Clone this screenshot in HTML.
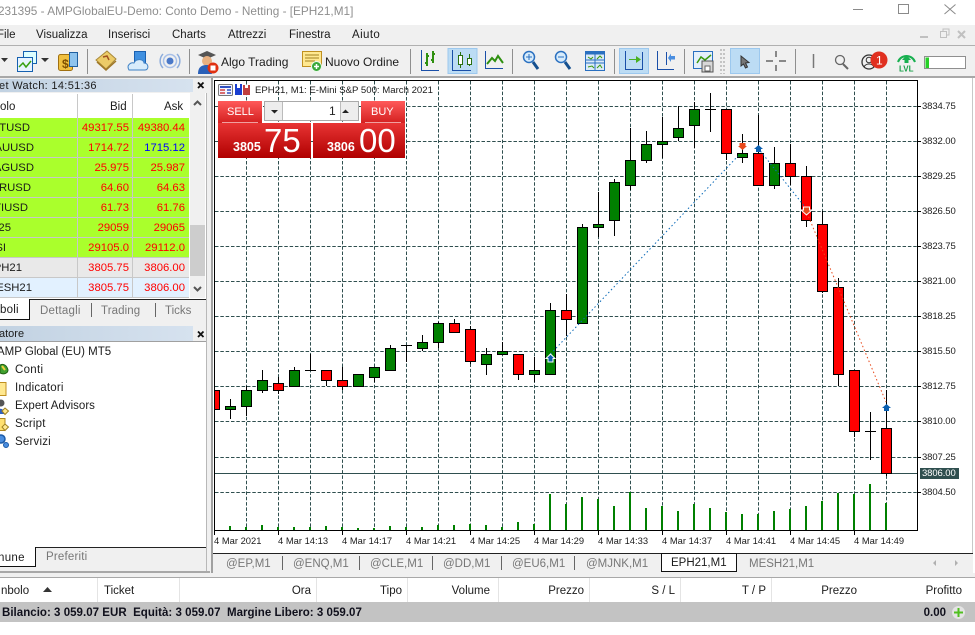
<!DOCTYPE html>
<html><head><meta charset="utf-8"><title>EPH21,M1</title>
<style>
html,body{margin:0;padding:0}
body{width:975px;height:635px;overflow:hidden;background:#fff;position:relative;font-family:"Liberation Sans",sans-serif;font-size:11.5px;color:#1c1c1c}
.a{position:absolute}
.t{position:absolute;white-space:nowrap;line-height:14px}
.r{text-align:right}
.row{position:absolute;left:0;width:189px;height:19px;border-bottom:1px solid #c8c8c8}
.row span{position:absolute;top:3px;line-height:14px;white-space:nowrap;font-size:11.3px}
.row .s{color:#1a1a1a}
.row .b{right:60px;color:#f00}
.row .k{right:4px;color:#f00}
.v{position:absolute;background:#a0a0a0;width:1px}
.g{color:#777}
.pl{position:absolute;left:922px;font-size:9.5px;line-height:12px;color:#1c1c1c;letter-spacing:-.1px}
.tl{position:absolute;top:535px;font-size:9.4px;line-height:12px;color:#1c1c1c;white-space:nowrap}
svg{position:absolute;overflow:visible}
</style></head><body>
<div class="t" style="left:-2px;top:4px;font-size:11.8px;color:#8e8e8e">231395 - AMPGlobalEU-Demo: Conto Demo - Netting - [EPH21,M1]</div>
<svg style="left:0;top:0" width="975" height="25"><path d="M853 9.500H863M898.500 4.500H908.500V13.500H898.500ZM944.500 4.500L955.500 14M955.500 4.500L944.500 14" fill="none" stroke="#8a8a8a"/></svg>
<div class="a" style="left:0;top:25px;width:975px;height:52px;background:#f0f0f0"></div>
<div class="a" style="left:0;top:45px;width:975px;height:1px;background:#b0b0b0"></div>
<div class="a" style="left:0;top:76px;width:975px;height:2px;background:#a8a8a8"></div>
<div class="t" style="left:-3px;top:28px">File</div>
<div class="t" style="left:36px;top:28px">Visualizza</div>
<div class="t" style="left:108px;top:28px">Inserisci</div>
<div class="t" style="left:172px;top:28px">Charts</div>
<div class="t" style="left:228px;top:28px">Attrezzi</div>
<div class="t" style="left:289px;top:28px">Finestra</div>
<div class="t" style="left:352px;top:28px;letter-spacing:.4px">Aiuto</div>
<svg style="left:0;top:25px" width="975" height="20"><path d="M920 12H928" stroke="#c0c0c0" stroke-width="2"/><path d="M940.500 6.500H946.500V12.500H940.500ZM943 6V4H949V10H947" fill="none" stroke="#c0c0c0"/><path d="M958 6L965 13M965 6L958 13" stroke="#c0c0c0" stroke-width="2"/></svg>

<!-- toolbar -->
<svg style="left:0;top:45px" width="975" height="32" fill="none">
<rect x="448" y="3.500" width="29" height="25" fill="#bcdcf4" stroke="#9cc8ee"/>
<rect x="619.500" y="3.500" width="29" height="25" fill="#bcdcf4" stroke="#9cc8ee"/>
<rect x="730.500" y="3.500" width="29" height="25" fill="#bcdcf4" stroke="#9cc8ee"/>
<path d="M87.500 4V29M189.500 4V29M410.500 4V29M512.500 4V29M614.500 4V29M684.500 4V29M795.500 4V29" stroke="#8f8f8f"/>
<path d="M721 4V29M724 4V29" stroke="#c4c4c4" stroke-dasharray="2 2" stroke-width="2"/>
<path d="M1 13L8 13L4.500 17ZM41 13L49 13L45 17Z" fill="#333"/>
<!-- chart windows -->
<rect x="23.500" y="6.500" width="13" height="12" fill="#dff" stroke="#1560b0"/><rect x="17.500" y="12.500" width="15" height="14" fill="#e8f4ff" stroke="#1560b0"/><path d="M19 22L23 18L26 22L31 16" stroke="#38a010" stroke-width="1.500"/>
<rect x="58.500" y="9.500" width="14" height="16" rx="2" fill="#f0c040" stroke="#a07010"/><rect x="69.500" y="7.500" width="8" height="14" fill="#8fc4ee" stroke="#2060a0"/>
<text x="62" y="23" font-size="12" font-weight="bold" fill="#805000" font-family="Liberation Sans">$</text>
<!-- book -->
<path d="M96 15L107 6L116 14L106 24Z" fill="#eccb68" stroke="#a88838"/><path d="M97 17L106 25L116 16" stroke="#a07828" stroke-width="1.500"/><path d="M103 12L107 11L109 15" stroke="#a05020" stroke-width="1.500"/>
<!-- cloud -->
<rect x="134.500" y="6.500" width="11" height="13" fill="#4090e0" stroke="#1a60b0"/><path d="M129 25C126 20 131 17 134 18C136 13 144 14 144 18C149 18 149 25 145 25Z" fill="#d8ecfb" stroke="#3d80c4"/>
<!-- signal -->
<circle cx="170" cy="16" r="3.500" fill="#4a78c8"/><circle cx="170" cy="16" r="6.500" stroke="#a8c0e8" stroke-width="1.500"/><path d="M163 9A10 10 0 0 0 163 23M177 9A10 10 0 0 1 177 23" stroke="#8cacdc" stroke-width="1.500"/>
<!-- algo -->
<path d="M198 10L207 6L216 10L207 14Z" fill="#555"/><circle cx="207" cy="16" r="5" fill="#e8b080"/><path d="M198 29C198 20 204 20 208 20L212 29Z" fill="#2a60b8"/><circle cx="213" cy="23" r="5.500" fill="#e03010"/><rect x="210.500" y="20.500" width="5" height="5" fill="#fff"/>
<!-- order -->
<rect x="302.500" y="6.500" width="19" height="15" fill="#ffe890" stroke="#c09020"/><path d="M305 10H319M305 13H319M305 16H315" stroke="#a08020"/><circle cx="316.500" cy="21.500" r="5" fill="#38a838" stroke="#e8f8e8"/><path d="M314 21.500H319M316.500 19V24" stroke="#fff" stroke-width="1.500"/>
<!-- bar chart -->
<path d="M421.500 5V25.500H439" stroke="#1a4fa8"/><path d="M427 8V21M425 18H427M427 11H429M433 6V18M431 15H433M433 9H435" stroke="#2f9010" stroke-width="2"/>
<!-- candle -->
<path d="M452.500 5V25.500H471" stroke="#1a4fa8"/><path d="M460.500 7V23M469.500 9V21" stroke="#2a7010"/><rect x="458.500" y="10.500" width="4" height="9" fill="#fff" stroke="#2a7010"/><rect x="467.500" y="13.500" width="4" height="6" fill="#fff" stroke="#2a7010"/>
<!-- line -->
<path d="M485.500 6V23.500H503" stroke="#1a4fa8"/><path d="M487 19L492 13L495 16L498 11L503 18" stroke="#2f9010" stroke-width="2"/>
<!-- zoom -->
<circle cx="529" cy="12" r="5.500" fill="#d8ecfb" stroke="#2a70c0" stroke-width="1.500"/><path d="M533 17L538 24" stroke="#15508f" stroke-width="3"/><path d="M526 12H532M529 9V15" stroke="#2a70c0"/>
<circle cx="561" cy="12" r="5.500" fill="#d8ecfb" stroke="#2a70c0" stroke-width="1.500"/><path d="M565 17L570 24" stroke="#15508f" stroke-width="3"/><path d="M558 12H564" stroke="#2a70c0"/>
<!-- tile -->
<rect x="585.500" y="6.500" width="19" height="19" fill="#dceaf8" stroke="#2a70c0"/><rect x="585.500" y="6.500" width="19" height="3" fill="#2a70c0"/><path d="M595 7V25M586 15H604M586 18H604" stroke="#2a70c0"/><path d="M588 12L591 14L593 12M597 14L600 11L602 13M588 22L592 21L594 23M597 23L600 20L602 23" stroke="#3a9a10"/>
<!-- autoscroll -->
<path d="M625.500 6V24.500H643" stroke="#1a4fa8"/><path d="M642.500 7V24" stroke="#1a4fa8"/><path d="M629 14H636V11L641 14.500L636 18V15H629Z" fill="#48b020"/>
<path d="M657.500 6V24.500H674" stroke="#1a4fa8"/><path d="M666.500 7V20" stroke="#1a4fa8"/><path d="M675 11H671V8.500L668 13L671 17V14.500H675Z" fill="#4a8ee0"/>
<!-- save -->
<rect x="693.500" y="6.500" width="19" height="17" fill="#e4f0fb" stroke="#2a70c0"/><path d="M697 18L701 12L705 15L711 10" stroke="#3a9a10" stroke-width="1.500"/><rect x="702" y="16" width="11" height="11" fill="#d8d8d8" stroke="#555"/><rect x="705" y="21" width="5" height="5" fill="#fff" stroke="#666"/>
<!-- cursor -->
<path d="M741 11L741 21L743.500 19L745.500 23L747.500 22L745.500 18L749 17.500Z" fill="#777" stroke="#333"/>
<path d="M766 16H773M779 16H786M776 6V12M776 20V26" stroke="#666" stroke-width="1.500"/>
<path d="M813.500 9V23" stroke="#777" stroke-width="1.500"/>
<circle cx="840" cy="15" r="4.500" stroke="#666" stroke-width="1.300"/><path d="M843 19L848 24" stroke="#666" stroke-width="2"/>
<circle cx="869" cy="17" r="7" stroke="#333" stroke-width="1.300"/><circle cx="869" cy="15" r="2.800" stroke="#333"/><path d="M864 22C866 18 872 18 874 22" stroke="#333"/>
<circle cx="879" cy="15" r="8.500" fill="#e03020"/><text x="876" y="19.500" font-size="12" fill="#fff" font-family="Liberation Sans">1</text>
<path d="M898 17A9 9 0 0 1 915 17" stroke="#18b050" stroke-width="2"/><path d="M906.500 10L911 15H908.500V18H904.500V15H902Z" fill="#18b050"/>
<text x="899" y="26.500" font-size="8" font-weight="bold" fill="#18a048" font-family="Liberation Sans">LVL</text>
<rect x="924.500" y="11.500" width="41" height="12" fill="#fff" stroke="#8f8f8f"/><rect x="925.500" y="12.500" width="3.500" height="10.500" fill="#28d028"/>
</svg>
<div class="t" style="left:221px;top:55px;font-size:12px">Algo Trading</div>
<div class="t" style="left:325px;top:55px;font-size:12px">Nuovo Ordine</div>

<!-- left panel frame -->
<div class="a" style="left:0;top:78px;width:212px;height:495px;background:#f0f0f0"></div>
<div class="a" style="left:206px;top:93px;width:1px;height:479px;background:#b8b8b8"></div>
<div class="a" style="left:211px;top:78px;width:2px;height:495px;background:#a0a0a0"></div>

<!-- market watch -->
<div class="a" style="left:0;top:79px;width:193px;height:13px;background:linear-gradient(90deg,#c2d2e2,#d6e2ef)"></div>
<div class="t" style="left:-1px;top:79px;font-size:11px;letter-spacing:.33px">et Watch: 14:51:36</div>
<svg style="left:197px;top:81px" width="8" height="9"><path d="M1 1.500L6.500 7M6.500 1.500L1 7" stroke="#111" stroke-width="1.800"/></svg>
<div class="a" style="left:0;top:93px;width:206px;height:206px;background:#fff"></div>
<div class="t" style="left:0;top:100px">olo</div>
<div class="t" style="left:110px;top:100px">Bid</div>
<div class="t" style="left:164px;top:100px">Ask</div>
<div class="row" style="top:118px;background:#aaff2c"><span class="s" style="right:159px">BTUSD</span><span class="b">49317.55</span><span class="k">49380.44</span></div>
<div class="row" style="top:138px;background:#aaff2c"><span class="s" style="right:155px">AUUSD</span><span class="b">1714.72</span><span class="k" style="color:#00f">1715.12</span></div>
<div class="row" style="top:158px;background:#aaff2c"><span class="s" style="right:155px">AGUSD</span><span class="b">25.975</span><span class="k">25.987</span></div>
<div class="row" style="top:178px;background:#aaff2c"><span class="s" style="right:158px">BRUSD</span><span class="b">64.60</span><span class="k">64.63</span></div>
<div class="row" style="top:198px;background:#aaff2c"><span class="s" style="right:161px">TIUSD</span><span class="b">61.73</span><span class="k">61.76</span></div>
<div class="row" style="top:218px;background:#aaff2c"><span class="s" style="right:178px">25</span><span class="b">29059</span><span class="k">29065</span></div>
<div class="row" style="top:238px;background:#aaff2c"><span class="s" style="right:183px">SI</span><span class="b">29105.0</span><span class="k">29112.0</span></div>
<div class="row" style="top:258px;background:#e9e9e9"><span class="s" style="right:167px">PH21</span><span class="b">3805.75</span><span class="k">3806.00</span></div>
<div class="row" style="top:278px;background:#e2f1ff"><span class="s" style="right:157px">ESH21</span><span class="b">3805.75</span><span class="k">3806.00</span></div>
<div class="a" style="left:77px;top:94px;width:1px;height:204px;background:#c8c8c8"></div>
<div class="a" style="left:132px;top:94px;width:1px;height:204px;background:#c8c8c8"></div>
<div class="a" style="left:190px;top:93px;width:15px;height:205px;background:#f0f0f0"></div>
<div class="a" style="left:190px;top:225px;width:15px;height:51px;background:#cdcdcd"></div>
<svg style="left:190px;top:98px" width="15" height="198" fill="none"><path d="M4 7L7.500 3.500L11 7M4 189L7.500 192.500L11 189" stroke="#555" stroke-width="2"/></svg>
<div class="a" style="left:0;top:299px;width:206px;height:1px;background:#222"></div>
<div class="a" style="left:0;top:299px;width:30px;height:21px;background:#fff;border-right:1px solid #111;border-bottom:1px solid #111;box-sizing:border-box"></div>
<div class="t" style="left:0;top:303px;font-size:11.5px;letter-spacing:.2px">boli</div>
<div class="t g" style="left:40px;top:304px;letter-spacing:.2px">Dettagli</div>
<div class="t g" style="left:101px;top:304px;letter-spacing:.1px">Trading</div>
<div class="t g" style="left:165px;top:304px">Ticks</div>
<div class="v" style="left:91px;top:303px;height:14px;background:#666"></div>
<div class="v" style="left:155px;top:303px;height:14px;background:#666"></div>

<!-- navigator -->
<div class="a" style="left:0;top:326px;width:193px;height:15px;background:linear-gradient(90deg,#c2d2e2,#d6e2ef)"></div>
<div class="t" style="left:-1px;top:327px;font-size:11px">atore</div>
<svg style="left:197px;top:330px" width="8" height="9"><path d="M1 1.500L6.500 7M6.500 1.500L1 7" stroke="#111" stroke-width="1.800"/></svg>
<div class="a" style="left:0;top:341px;width:206px;height:207px;background:#fff;border-top:1px solid #a0a0a0;box-sizing:border-box"></div>
<div class="t" style="left:-3px;top:345px;font-size:11.5px">AMP Global (EU) MT5</div>
<div class="t" style="left:15px;top:363px;letter-spacing:.3px">Conti</div>
<div class="t" style="left:15px;top:381px;letter-spacing:.2px">Indicatori</div>
<div class="t" style="left:15px;top:399px">Expert Advisors</div>
<div class="t" style="left:15px;top:417px;letter-spacing:.2px">Script</div>
<div class="t" style="left:15px;top:435px;letter-spacing:.2px">Servizi</div>
<svg style="left:0;top:360px" width="12" height="90" fill="none">
<path d="M0 5C4 3 7 6 8 10C8 13 4 15 0 13Z" fill="#40a030" stroke="#206010"/><path d="M2 6L5 10" stroke="#f0d040" stroke-width="2"/>
<rect x="-3" y="22.500" width="9" height="13" fill="#ffe890" stroke="#c09020"/>
<circle cx="1" cy="43" r="3.500" fill="#555"/><path d="M-3 54C-3 47 4 47 5 54Z" fill="#3060c0"/><path d="M5 48L8.500 51L5 54.500L2 51Z" fill="#ffe890" stroke="#a08020"/>
<rect x="-3" y="58.500" width="8" height="12" fill="#ffe070" stroke="#b08820"/><path d="M5 64L8.500 67L5 70.500L2 67Z" fill="#ffe890" stroke="#a08020"/>
<circle cx="1" cy="79" r="4" fill="#4a8ee0" stroke="#1a5aa8" stroke-width="1.500"/><circle cx="6" cy="85" r="2.500" fill="#4a8ee0" stroke="#1a5aa8"/>
</svg>
<div class="a" style="left:0;top:547px;width:206px;height:1px;background:#222"></div>
<div class="a" style="left:0;top:547px;width:36px;height:20px;background:#fff;border:1px solid #111;border-left:0;border-top:0;box-sizing:border-box"></div>
<div class="t" style="left:-2px;top:551px;letter-spacing:.3px">nune</div>
<div class="t g" style="left:46px;top:550px;letter-spacing:.2px">Preferiti</div>
<div class="a" style="left:0;top:571px;width:210px;height:2px;background:#a8a8a8"></div>

<!-- chart -->
<div class="a" style="left:213px;top:78px;width:762px;height:475px;background:#fff"></div>
<svg style="left:0;top:0" width="975" height="635" fill="none">
<g stroke="#2f4f4f">
<path stroke-dasharray="3.500 1.830" d="M246.500 81V530M278.500 81V530M310.500 81V530M342.500 81V530M374.500 81V530M406.500 81V530M438.500 81V530M470.500 81V530M502.500 81V530M534.500 81V530M566.500 81V530M598.500 81V530M630.500 81V530M662.500 81V530M694.500 81V530M726.500 81V530M758.500 81V530M790.500 81V530M822.500 81V530M854.500 81V530M886.500 81V530"/>
<path stroke-dasharray="3.500 1.830" d="M215 106.500H917M215 141.500H917M215 176.500H917M215 211.500H917M215 246.500H917M215 281.500H917M215 316.500H917M215 351.500H917M215 386.500H917M215 421.500H917M215 457.500H917M215 492.500H917"/>
<path d="M215 473.500H917"/>
</g>
<!-- volumes -->
<path stroke="#008000" stroke-width="2" d="M230 526V530M246 527V530M262 525V530M278 527V530M294 527V530M310 527V530M326 526V530M342 527V530M358 528V530M374 528V530M390 526V530M406 527V530M422 527V530M438 525V530M454 525V530M470 524V530M486 525V530M502 527V530M518 522V530M534 524V530M550 494V530M566 504V530M582 497V530M598 499V530M614 506V530M630 492V530M646 508V530M662 506V530M678 511V530M694 504V530M710 508V530M726 512V530M742 514V530M758 514V530M774 511V530M790 509V530M806 506V530M822 501V530M838 493V530M854 494V530M870 484V530M886 503V530"/>
<!-- wicks -->
<path stroke="#000" d="M230.500 399V419M246.500 386V416M262.500 370V393M278.500 377V394M294.500 367V386M310.500 354V370M305 370.500H316M326.500 370V386M342.500 367V390M374.500 367V382M390.500 345V370M406.500 345V362M401 345.500H412M422.500 335V351M438.500 322V348M454.500 319V332M470.500 326V364M486.500 348V375M502.500 342V354M518.500 354V380M534.500 357V382M550.500 303V374M566.500 294V336M582.500 224V323M598.500 192V237M614.500 179V236M630.500 128V190M646.500 131V163M662.500 117V158M678.500 106V141M694.500 102V148M710.500 93V132M705 109.500H716M726.500 109V160M742.500 134V163M758.500 115V185M774.500 147V189M790.500 144V185M806.500 166V227M822.500 211V293M838.500 278V386M854.500 370V437M870.500 412V460M865 431.500H876M886.500 390V476"/>
<!-- green bodies -->
<g fill="#008000" stroke="#000">
<rect x="225.500" y="406.500" width="10" height="3"/><rect x="241.500" y="390.500" width="10" height="16"/><rect x="257.500" y="380.500" width="10" height="10"/><rect x="289.500" y="370.500" width="10" height="16"/><rect x="353.500" y="374.500" width="10" height="12"/><rect x="369.500" y="367.500" width="10" height="10"/><rect x="385.500" y="348.500" width="10" height="22"/><rect x="417.500" y="342.500" width="10" height="6"/><rect x="433.500" y="323.500" width="10" height="19"/><rect x="481.500" y="354.500" width="10" height="10"/><rect x="497.500" y="351.500" width="10" height="3"/><rect x="529.500" y="370.500" width="10" height="4"/><rect x="545.500" y="310.500" width="10" height="64"/><rect x="577.500" y="227.500" width="10" height="96"/><rect x="593.500" y="224.500" width="10" height="3"/><rect x="609.500" y="182.500" width="10" height="38"/><rect x="625.500" y="160.500" width="10" height="25"/><rect x="641.500" y="144.500" width="10" height="16"/><rect x="657.500" y="141.500" width="10" height="3"/><rect x="673.500" y="128.500" width="10" height="9"/><rect x="689.500" y="109.500" width="10" height="16"/><rect x="737.500" y="153.500" width="10" height="4"/><rect x="769.500" y="163.500" width="10" height="22"/>
</g>
<!-- red bodies -->
<g fill="#f00" stroke="#000">
<rect x="214.500" y="390.500" width="5" height="19"/><rect x="273.500" y="383.500" width="10" height="7"/><rect x="321.500" y="370.500" width="10" height="10"/><rect x="337.500" y="380.500" width="10" height="6"/><rect x="449.500" y="323.500" width="10" height="9"/><rect x="465.500" y="329.500" width="10" height="32"/><rect x="513.500" y="354.500" width="10" height="20"/><rect x="561.500" y="310.500" width="10" height="9"/><rect x="721.500" y="109.500" width="10" height="44"/><rect x="753.500" y="153.500" width="10" height="32"/><rect x="785.500" y="163.500" width="10" height="13"/><rect x="801.500" y="176.500" width="10" height="44"/><rect x="817.500" y="224.500" width="10" height="67"/><rect x="833.500" y="287.500" width="10" height="87"/><rect x="849.500" y="370.500" width="10" height="61"/><rect x="881.500" y="428.500" width="10" height="45"/>
</g>
<!-- trade lines -->
<path stroke="#0a6ab8" stroke-dasharray="1.500 2.500" d="M550.500 354L738 156M758 148L805 207"/>
<path stroke="#e84a1c" stroke-dasharray="1.500 2.500" d="M807 213L886 402"/>
<!-- arrows -->
<path d="M550.500 354L555 358.500H553V362H548V358.500H546Z" fill="#0a5fb0" stroke="#fff"/>
<path d="M739.500 143H745.500V146H747L742.500 150L738 146H739.500Z" fill="#e84a1c"/>
<path d="M758.500 145L763 149H761V152H756V149H754Z" fill="#0a5fb0"/>
<path d="M803.500 207H809.500V210H812L806.500 215L801 210H803.500Z" fill="#e84a1c" stroke="#fff"/>
<path d="M886.500 404L891 408H889V411H884V408H882Z" fill="#0a5fb0"/>
<!-- frame -->
<path stroke="#000" d="M214.500 80.500H917.500V530.500H214.500Z"/>
<path stroke="#000" d="M917.500 106.500H921M917.500 141.500H921M917.500 176.500H921M917.500 211.500H921M917.500 246.500H921M917.500 281.500H921M917.500 316.500H921M917.500 351.500H921M917.500 386.500H921M917.500 421.500H921M917.500 457.500H921M917.500 492.500H921"/>
<path stroke="#000" d="M214.500 531V535M278.500 531V535M342.500 531V535M406.500 531V535M470.500 531V535M534.500 531V535M598.500 531V535M662.500 531V535M726.500 531V535M790.500 531V535M854.500 531V535"/>
<!-- chart title icons -->
<rect x="218.500" y="84.500" width="14" height="11" rx="1" fill="#f4f4ff" stroke="#777"/><path d="M220 87H231" stroke="#3050c0" stroke-width="2"/><path d="M220 90H225M220 93H225" stroke="#d04040" stroke-width="1.500"/><path d="M227 90H231M227 93H231" stroke="#3050c0" stroke-width="1.500"/>
<path d="M235 84H242V95H235Z" fill="#1a3fd0"/><path d="M243 85H250V95H243Z" fill="#c04040"/><rect x="237" y="84" width="3" height="4" fill="#fff"/><rect x="245" y="85" width="3" height="3" fill="#fff"/>
</svg>
<div class="a" style="left:972px;top:78px;width:1px;height:475px;background:#c8c8c8"></div>

<div class="t" style="left:255px;top:84px;font-size:9.6px">EPH21, M1: E-Mini S&amp;P 500: March 2021</div>

<!-- one click -->
<div class="a" style="left:218px;top:101px;width:44px;height:22px;background:linear-gradient(#ff5a5a,#d42020)"></div>
<div class="a" style="left:361px;top:101px;width:44px;height:22px;background:linear-gradient(#ff5a5a,#d42020)"></div>
<div class="a" style="left:218px;top:123px;width:93px;height:35px;background:linear-gradient(#e83434,#b00000)"></div>
<div class="a" style="left:313px;top:123px;width:92px;height:35px;background:linear-gradient(#e83434,#b00000)"></div>
<div class="a" style="left:222px;top:122px;width:36px;height:1px;background:#f0a0a0"></div>
<div class="a" style="left:365px;top:122px;width:36px;height:1px;background:#f0a0a0"></div>
<div class="t" style="left:227px;top:105px;font-size:11px;color:#fff">SELL</div>
<div class="t" style="left:371px;top:105px;font-size:11px;color:#fff">BUY</div>
<div class="a" style="left:264px;top:101px;width:95px;height:20px;background:#fff;border:1px solid #aaa;box-sizing:border-box"></div>
<div class="a" style="left:265px;top:102px;width:18px;height:18px;background:#ededed;border-right:1px solid #bbb;box-sizing:border-box"></div>
<div class="a" style="left:340px;top:102px;width:18px;height:18px;background:#ededed;border-left:1px solid #bbb;box-sizing:border-box"></div>
<svg style="left:264px;top:101px" width="95" height="20"><path d="M7 9H14L10.500 12.500Z M78 12H85L81.500 8.500Z" fill="#222"/></svg>
<div class="t" style="left:329px;top:104px;font-size:12px;color:#222">1</div>
<div class="t" style="left:233px;top:140px;font-size:12.500px;font-weight:bold;color:#fff">3805</div>
<div class="t" style="left:264px;top:126px;font-size:33px;line-height:30px;color:#fff">75</div>
<div class="t" style="left:327px;top:140px;font-size:12.500px;font-weight:bold;color:#fff">3806</div>
<div class="t" style="left:359px;top:126px;font-size:33px;line-height:30px;color:#fff">00</div>

<!-- price labels -->
<div class="pl" style="top:101px">3834.75</div><div class="pl" style="top:136px">3832.00</div><div class="pl" style="top:171px">3829.25</div><div class="pl" style="top:206px">3826.50</div><div class="pl" style="top:241px">3823.75</div><div class="pl" style="top:276px">3821.00</div><div class="pl" style="top:311px">3818.25</div><div class="pl" style="top:346px">3815.50</div><div class="pl" style="top:381px">3812.75</div><div class="pl" style="top:416px">3810.00</div><div class="pl" style="top:452px">3807.25</div><div class="pl" style="top:487px">3804.50</div>
<div class="a" style="left:920px;top:468px;width:39px;height:11px;background:#2f4f4f"></div>
<div class="pl" style="top:468px;color:#fff">3806.00</div>

<div class="tl" style="left:214px">4 Mar 2021</div><div class="tl" style="left:278px">4 Mar 14:13</div><div class="tl" style="left:342px">4 Mar 14:17</div><div class="tl" style="left:406px">4 Mar 14:21</div><div class="tl" style="left:470px">4 Mar 14:25</div><div class="tl" style="left:534px">4 Mar 14:29</div><div class="tl" style="left:598px">4 Mar 14:33</div><div class="tl" style="left:662px">4 Mar 14:37</div><div class="tl" style="left:726px">4 Mar 14:41</div><div class="tl" style="left:790px">4 Mar 14:45</div><div class="tl" style="left:854px">4 Mar 14:49</div>

<!-- chart tabs -->
<div class="a" style="left:213px;top:553px;width:760px;height:20px;background:#f0f0f0;border-top:1px solid #222;box-sizing:border-box"></div>
<div class="a" style="left:661px;top:553px;width:76px;height:19px;background:#fff;border:1px solid #111;box-sizing:border-box"></div>
<div class="t g" style="left:226px;top:557px">@EP,M1</div>
<div class="t g" style="left:293px;top:557px">@ENQ,M1</div>
<div class="t g" style="left:370px;top:557px">@CLE,M1</div>
<div class="t g" style="left:443px;top:557px">@DD,M1</div>
<div class="t g" style="left:512px;top:557px">@EU6,M1</div>
<div class="t g" style="left:586px;top:557px">@MJNK,M1</div>
<div class="t" style="left:671px;top:556px">EPH21,M1</div>
<div class="t g" style="left:749px;top:557px">MESH21,M1</div>
<div class="v" style="left:282px;top:556px;height:14px;background:#666"></div>
<div class="v" style="left:359px;top:556px;height:14px;background:#666"></div>
<div class="v" style="left:432px;top:556px;height:14px;background:#666"></div>
<div class="v" style="left:501px;top:556px;height:14px;background:#666"></div>
<div class="v" style="left:574px;top:556px;height:14px;background:#666"></div>
<svg style="left:930px;top:558px" width="30" height="10"><path d="M3 5L6 2V8ZM25 2L28 5L25 8Z" fill="#b0b0b0"/></svg>
<div class="a" style="left:0;top:573px;width:975px;height:4px;background:#f0f0f0"></div>

<!-- bottom -->
<div class="a" style="left:0;top:577px;width:975px;height:1px;background:#a8a8a8"></div>
<div class="a" style="left:0;top:578px;width:975px;height:24px;background:#fff"></div>
<div class="t" style="left:1px;top:584px">nbolo</div>
<svg style="left:43px;top:587px" width="10" height="6"><path d="M0 5H9L4.500 0Z" fill="#333"/></svg>
<div class="t" style="left:104px;top:584px">Ticket</div>
<div class="t r" style="right:664px;top:584px">Ora</div>
<div class="t r" style="right:573px;top:584px">Tipo</div>
<div class="t r" style="right:485px;top:584px">Volume</div>
<div class="t r" style="right:391px;top:584px">Prezzo</div>
<div class="t r" style="right:300px;top:584px">S / L</div>
<div class="t r" style="right:209px;top:584px">T / P</div>
<div class="t r" style="right:118px;top:584px">Prezzo</div>
<div class="t r" style="right:13px;top:584px">Profitto</div>
<div class="v" style="left:97px;top:578px;height:24px;background:#e4e4e4"></div>
<div class="v" style="left:179px;top:578px;height:24px;background:#e4e4e4"></div>
<div class="v" style="left:316px;top:578px;height:24px;background:#e4e4e4"></div>
<div class="v" style="left:407px;top:578px;height:24px;background:#e4e4e4"></div>
<div class="v" style="left:498px;top:578px;height:24px;background:#e4e4e4"></div>
<div class="v" style="left:589px;top:578px;height:24px;background:#e4e4e4"></div>
<div class="v" style="left:680px;top:578px;height:24px;background:#e4e4e4"></div>
<div class="v" style="left:771px;top:578px;height:24px;background:#e4e4e4"></div>
<div class="a" style="left:0;top:602px;width:975px;height:20px;background:#c3c3c3"></div>
<div class="t" style="left:2px;top:606px;font-size:11.500px;font-weight:bold;color:#10101c;letter-spacing:.03px">Bilancio: 3 059.07 EUR&nbsp; Equità: 3 059.07&nbsp; Margine Libero: 3 059.07</div>
<div class="t r" style="right:29px;top:606px;font-size:11.500px;font-weight:bold;color:#10101c">0.00</div>
<svg style="left:951px;top:605px" width="15" height="15"><circle cx="7.500" cy="7.500" r="6.500" fill="#e4e4e4"/><path d="M3 7.500H12M7.500 3V12" stroke="#50c020" stroke-width="2"/></svg>
</body></html>
